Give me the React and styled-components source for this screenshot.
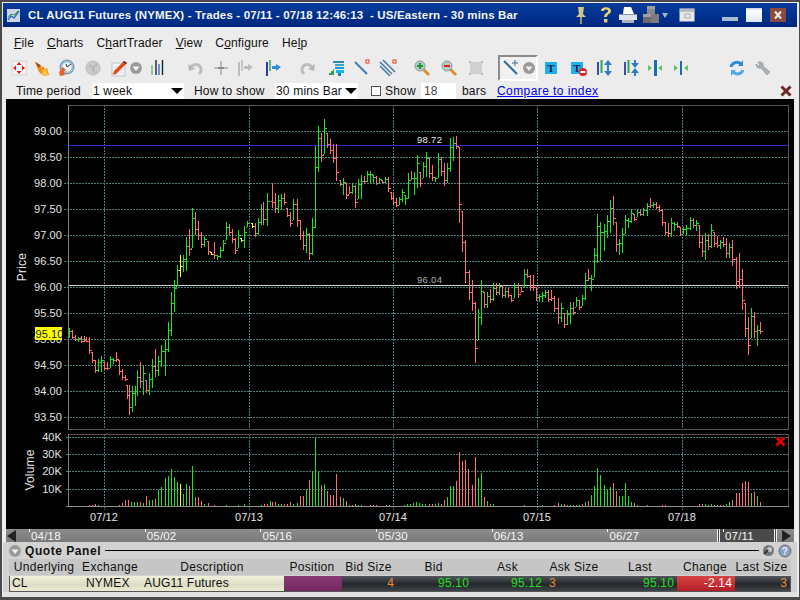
import React from 'react';
import styled, { createGlobalStyle } from 'styled-components';

const Global = createGlobalStyle`
  html, body { margin: 0; padding: 0; background: #3c3c3c; }
  * { box-sizing: border-box; }
`;

const UI = `"Liberation Sans", Arial, sans-serif`;

const Frame = styled.div`
  width: 800px; height: 600px; overflow: hidden;
  display: flex; flex-direction: column;
  border: 2px solid #4a4a4a; border-bottom-width: 3px; border-right-width: 1px;
  padding: 1px 2px 0 1px;
  background: #ececec;
  font-family: ${UI}; font-size: 12px; letter-spacing: .18px; color: #111;
`;
const TitleBar = styled.div`
  height: 24px; flex: none; display: flex; align-items: center; padding-left: 4px;
  background: linear-gradient(#0a3c9c, #00328f 50%, #00277f);
  color: #f4f4f4; font-weight: 700; font-size: 11.5px; letter-spacing: .15px; white-space: pre;
`;
const TitleText = styled.span` margin-left: 8px; flex: 1; `;
const TitleIcons = styled.div` display: flex; align-items: center; margin-right: 11px; `;
const TitleSlot = styled.span`
  display: flex; justify-content: center; align-items: center; width: ${p => p.$w}px; margin-left: ${p => p.$ml || 0}px;
`;
const MenuBar = styled.div`
  height: 28px; flex: none; display: flex; align-items: center; gap: 13px; padding: 4px 0 0 11px; font-size: 12px;
`;
const MenuItem = styled.span` & u { text-decoration: underline; } `;
const Toolbar = styled.div` height: 26px; flex: none; display: flex; align-items: center; padding-left: 6px; `;
const Tool = styled.span`
  display: flex; align-items: center; justify-content: center; flex: none;
  width: ${p => p.$w || 20}px; margin-left: ${p => p.$ml || 0}px;
`;
const Pressed = styled.span`
  display: flex; align-items: center; justify-content: center; flex: none; gap: 1px;
  width: 40px; height: 26px; margin-left: ${p => p.$ml || 0}px;
  border: 2px solid #8c8c8c; border-right-color: #fff; border-bottom-color: #fff; background: #f0f0f0;
`;
const Options = styled.div` height: 18px; flex: none; display: flex; align-items: center; padding: 1px 0 0 13px; position: relative; `;
const Field = styled.span` margin-left: ${p => p.$ml || 0}px; width: ${p => p.$w}px; white-space: nowrap; flex: none; `;
const SelectBox = styled.span`
  display: flex; align-items: center; justify-content: space-between; height: 16px; background: #fff; white-space: nowrap; flex: none;
  width: ${p => p.$w}px; margin-left: ${p => p.$ml || 0}px; padding: 0 1px 0 1px;
`;
const Arrow = styled.i`
  width: 0; height: 0; border-left: 6px solid transparent; border-right: 6px solid transparent; border-top: 6px solid #000;
`;
const Check = styled.i` width: 10px; height: 10px; border: 1px solid #555; background: #fff; margin: 0 4px 0 ${p => p.$ml}px; flex: none; `;
const NumInput = styled.span` width: 35px; height: 16px; background: #fff; padding-left: 3px; line-height: 16px; color: #444; flex: none; `;
const LinkText = styled.a` color: #0000ee; text-decoration: underline; margin-left: 11px; white-space: nowrap; letter-spacing: .42px; `;
const CloseX = styled.span` margin-left: auto; margin-right: 5px; display: flex; `;
const ChartBox = styled.div` height: 430px; flex: none; margin: 0 3px; background: #000; `;
const ChartSvg = styled.svg` display: block; width: 788px; height: 430px; `;
const SliderBar = styled.div`
  height: 13px; flex: none; margin: 0 3px; display: flex; padding-left: 23px; position: relative;
  background: linear-gradient(#8c8c8c, #7a7a7a);
`;
const SliderLabel = styled.span`
  flex: none; width: 115.7px; color: #f6f6f6; font-size: 11.5px; line-height: 13px; padding: 1px 0 0 2px; position: relative; letter-spacing: .2px;
  &::before { content: ''; position: absolute; left: 0; top: 0; width: 1px; height: 3px; background: #fff; }
`;
const LastLabel = styled(SliderLabel)` position: absolute; left: 717px; width: 40px; `;
const SliderEnd = styled.span`
  position: absolute; top: 0; bottom: 0; left: ${p => p.$l}px; display: flex; align-items: center;
`;
const Thumb = styled.span`
  position: absolute; top: 0; bottom: 0; left: 711px; width: 60px;
  background: #4a4a4a; border-left: 3px double #eee; border-right: 3px double #eee;
`;
const PanelHead = styled.div`
  height: 17px; flex: none; display: flex; align-items: center; background: #d2d2d2; padding: 0 5px 0 5px;
`;
const PanelTitle = styled.b` font-size: 12px; letter-spacing: .55px; margin: 0 4px 0 3px; color: #111; white-space: nowrap; `;
const PanelRule = styled.i` flex: 1; height: 1px; background: #000; margin-right: 3px; `;
const PanelBody = styled.div` height: 38px; flex: none; background: #d2d2d2; display: flex; flex-direction: column; padding: 0 6px; `;
const TABLE_COLS = '70px 62px 142px 58px 55px 75px 73px 60px 72px 58px 55px';
const HeadRow = styled.div` display: grid; grid-template-columns: ${TABLE_COLS}; height: 16px; flex: none; background: #c6c6c6; `;
const HeadCell = styled.span` text-align: center; line-height: 16px; white-space: nowrap; font-size: 12px; letter-spacing: .3px; `;
const DataRow = styled.div`
  display: grid; grid-template-columns: ${TABLE_COLS}; height: 16px; flex: none; margin: 1px 0 0; border: 1px solid #555; border-top: 0;
  width: 782px; font-size: 12px; line-height: 15px;
  background: linear-gradient(#50565c, #23262a 55%, #3f454b);
`;
const Cell = styled.span`
  white-space: nowrap; text-align: ${p => p.$a || 'right'}; padding: 0 ${p => p.$pr ?? 3}px 0 ${p => p.$pl ?? 0}px;
  color: ${p => p.$c || '#111'};
`;
const LightCell = styled(Cell)` background: linear-gradient(#f0f0dc, #dcdcc4 60%, #ecead2); `;
const PurpleCell = styled(Cell)` background: linear-gradient(#8a3a78, #72285e); `;
const RedCell = styled(Cell)` background: linear-gradient(#d84444, #b41e28); `;
const Footer = styled.div` height: 5px; flex: none; background: #e2e2e2; margin: 0 -6px; `;
const HelpWrap = styled.span` display: flex; margin-left: 3px; `;

/* ---------- chart data ---------- */
const A = `207g328-338 216r330-339 225r335-341 234g337-342 243r336-343 252r336-342 258r337-342 266r337-354 275r352-363 284r360-373 293g359-372 302g356-372 311r362-370 320r362-370 329g356-368 338g358-364 347r352-362 356r360-375 365r369-380 374r375-381 380r385-399 387r385-415 396g386-412 404g386-406 412g370-396 421r362-388 430g366-395 438r380-393 448g373-395 457g359-388 466r349-377 475g356-376 484g345-367 496g340-376 505g322-352 514g292-336 523g280-312 532g265-286 541y255-277 550g255-272 559g237-271 568r229-256 577g208-248 586r212-235 595r221-240 604r232-248 613g236-247 624r241-255 632y252-255 643r242-259 652g255-260 660g247-258 670g240-251 679g222-240 688r224-235 697r229-243 706r238-254 715g230-248 724y238-242 733g226-248 742g221-227 755y223-228 764r223-237 773g218-235 782g204-225 790r202-225 800g193-226`;
const B = `7r183-208 16r193-213 25g195-213 34g194-210 43r193-205 52r208-217 61r212-227 70g199-220 80r199-227 90r220-240 100r231-250 109g228-253 118r233-260 127g218-255 136g146-228 145g126-172 154r133-162 163g119-154 172r133-148 181r139-154 190r144-163 199r144-181 210r180-186 220g178-195 229r183-199 238r186-194 247g183-194 256r185-208 265g179-199 274g175-199 283r176-183 292g171-182 301g171-183 310g175-183 319r176-185 328g178-183 337r180-183 346g177-183 355r177-192 364r192-200 370r193-205 377r198-207 386g197-205 395g189-202 404g195-205 413g173-199 422r171-180 431g172-195 440g155-188 449r172-187 458g162-178 467g152-177 476r157-178 485r165-181 494g177-182 503g153-178 512r157-176 521r163-186 530g163-183 541g138-172 550g137-161 559r136-149 568r147-223 577r211-252 586r240-283`;
const C = `12r270-300 21r280-311 31r302-363 40g309-340 49g280-325 58r292-308 67g292-308 76r289-303 85g283-301 94r283-295 103g283-295 112r285-298 121g288-298 130r288-298 139r295-302 148g283-298 158r283-298 167r287-292 176g269-287 186r269-278 195r275-291 204r275-291 213r287-301 222g294-302 231g292-302 240g290-298 249r290-302 258r290-301 267r296-312 280r298-324 289g303-322 298r313-328 307g310-325 316g302-324 325r302-315 334g297-307 343r300-310 352g295-306 361g273-300 370r269-281 379g275-291`;
const D = `193g248-277 202g214-263 211g222-261 222g224-251 232g215-238 241g200-233 250r196-225 259r222-252 268g239-255 277g228-253 286g215-234 295g218-228 304g209-223 313r214-221 322g210-217 331r210-216 340g208-216 352g203-216 361r198-208 370g202-208 379r202-209 388r205-212 397r209-226 406r222-235 415r223-237 424g218-237 433g222-231 442r222-228 451r227-236 460g227-234 469g225-236 481g217-230 490r218-228 499g220-231 508r225-248 517r235-257 526g233-260 535r234-250 544g224-248 553r232-247 562r236-248 571g240-249 580r237-247 589r238-258 598g243-258 607r240-266 619r257-289 628r253-288 637r269-310 646r303-337 655r317-355 664g308-338 673r312-338 682g325-346 691r322-334`;

const COLORS = { g: '#16e61c', r: '#ff6f6f', y: '#ffff20' };
const parse = (text, base) =>
  text.split(' ').map(t => {
    const m = t.match(/^(\d+)([gry])(\d+)-(\d+)$/);
    return { x: Math.round(base + +m[1] / 3), c: m[2], a: +m[3], b: +m[4] };
  });
const BARS = [...parse(A, 0), ...parse(B, 270), ...parse(C, 465), ...parse(D, 530)];

const VA = `266r616 275r616 284r612 293g616 356r615 365r610 374r600 385r600 394g606 403g606 412g606 421r606 430g610 439r588 448g600 457g600 466r597 475g570 484g561 495g533 505g527 514g507 523g531 532g546 541y552 550g582 559g552 568r558 577g497 586r590 595r590 604r604 613g611 625r609 643r616 679g616 715g616 733g612 782g615 791r612 800r612 809g603`;
const VB = `7r606 16r606 25g612 34g612 43r612 52r612 61r606 70g612 82g610 91r588 100r588 109g567 118r540 127g516 136g414 145g516 154r555 163g552 172r573 181r585 190r585 199r522 211r591 220g594 229r603 238g615 247g615 256r612 265g615 274g615 301r615 310r615 319r615 349g615 358r615 403g615 412g612 421g612 430g609 439g606 448g609 457g612 466g612 478r612 487r612 496g612 505g609 514r612 523r600 532g591 541g558 550g558 559r543 568r456 577r483 586r480 595r507 607r555 616r471 625g534 634g519 643r591 652g603 661r612 670g612 763g615`;
const VC = `37g615 73r615 85r609 94g612 103r612 112g615 121g615 130g615 139g615 148g615 157r612 166g606 175r603 184g585 193g558 202g504 211g525 223g555 232g570 241g561 250r549 259r573 268g588 277g588 286g549 295g588 304g606 313r609 322g615 352g615 397r615 406r615 508r612 517r612 526g612 535g615 544g612 553r615 562g615 571r615 580r615 589g612 598g606 607r600 619r579 628r579 637r549 646r543 655r546 664g579 673r576 682g588 691r606`;
const parseVol = (text, base) =>
  text.split(' ').map(t => {
    const m = t.match(/^(\d+)([gry])(\d+)$/);
    return { x: Math.round(base + +m[1] / 3), c: m[2], top: Math.round(300 + +m[3] / 3) };
  });
const VOLS = [...parseVol(VA, 0), ...parseVol(VB, 270), ...parseVol(VC, 530)];

const PRICES = ['99.00', '98.50', '98.00', '97.50', '97.00', '96.50', '96.00', '95.50', '95.00', '94.50', '94.00', '93.50'];
const priceY = i => Math.round(130.5 + i * 26.05);
const GRID_X = [104, 249, 393, 537, 682];
const DAYS = ['07/12', '07/13', '07/14', '07/15', '07/18'];
const VOL_TICKS = [['40K', 437], ['30K', 454], ['20K', 471], ['10K', 489]];

const closeOf = b => {
  const r = b.b - b.a;
  return b.c === 'g' ? b.a + Math.round(r * 0.25) : b.c === 'r' ? b.b - Math.round(r * 0.25) : b.a + Math.round(r * 0.5);
};

const PriceBar = ({ bar, open }) => {
  const close = closeOf(bar);
  const o = Math.min(bar.b, Math.max(bar.a, open));
  return (
    <g stroke={COLORS[bar.c]}>
      <line x1={bar.x + 0.5} x2={bar.x + 0.5} y1={bar.a} y2={bar.b} />
      <line x1={bar.x - 1} x2={bar.x} y1={o + 0.5} y2={o + 0.5} />
      <line x1={bar.x + 1} x2={bar.x + 3} y1={close + 0.5} y2={close + 0.5} />
    </g>
  );
};

const Chart = () => (
  <ChartSvg viewBox="6 99 788 430" fontFamily={UI}>
    <g stroke="#4f8080" strokeDasharray="2 1" shapeRendering="crispEdges">
      {PRICES.map((_, i) => <line key={i} x1="64" x2="788" y1={priceY(i) + 0.5} y2={priceY(i) + 0.5} />)}
      {VOL_TICKS.map(([t, y]) => <line key={t} x1="66" x2="788" y1={y + 0.5} y2={y + 0.5} />)}
      {GRID_X.map(x => <line key={x} x1={x + 0.5} x2={x + 0.5} y1="105" y2="429" />)}
      {GRID_X.map(x => <line key={'v' + x} x1={x + 0.5} x2={x + 0.5} y1="434" y2="510" />)}
    </g>
    <g fill="none" stroke="#555" shapeRendering="crispEdges">
      <rect x="68.5" y="105.5" width="720" height="324" />
      <rect x="68.5" y="434.5" width="720" height="72" />
      <line x1="68.5" x2="68.5" y1="105" y2="430" stroke="#808080" />
      <line x1="68.5" x2="68.5" y1="434" y2="507" stroke="#808080" />
      <line x1="66" x2="789" y1="506.5" y2="506.5" stroke="#909090" />
    </g>
    <g shapeRendering="crispEdges">
      <line x1="69" x2="788" y1="145.5" y2="145.5" stroke="#2a2ad0" />
      <line x1="69" x2="788" y1="285.5" y2="285.5" stroke="#d0d0d0" />
    </g>
    <text x="417" y="143" fill="#e8e8e8" fontSize="9.5" letterSpacing=".3">98.72</text>
    <text x="417" y="283" fill="#b0b0b0" fontSize="9.5" letterSpacing=".3">96.04</text>
    <g shapeRendering="crispEdges">
      {BARS.map((b, i) => <PriceBar key={i} bar={b} open={i ? closeOf(BARS[i - 1]) : b.a} />)}
      {VOLS.map((v, i) => <line key={i} x1={v.x + 0.5} x2={v.x + 0.5} y1={v.top} y2="506" stroke={COLORS[v.c]} />)}
    </g>
    <g fill="#e4e4e4" fontSize="11" letterSpacing=".1">
      {PRICES.map((p, i) => <text key={p} x="62" y={priceY(i) + 4} textAnchor="end">{p}</text>)}
      {VOL_TICKS.map(([t, y]) => <text key={t} x="62" y={y + 4} textAnchor="end">{t}</text>)}
      {DAYS.map((d, i) => <text key={d} x={GRID_X[i]} y="521" textAnchor="middle">{d}</text>)}
      <text transform="translate(26 267) rotate(-90)" textAnchor="middle" fontSize="12" letterSpacing=".2">Price</text>
      <text transform="translate(34 470) rotate(-90)" textAnchor="middle" fontSize="12" letterSpacing=".2">Volume</text>
    </g>
    <rect x="35" y="327" width="27" height="13" fill="#ffff00" />
    <text x="35.5" y="338" fontSize="11" fill="#222" letterSpacing=".1">95.10</text>
    <path d="M776.5 437.5l8 8M784.5 437.5l-8 8" stroke="#e00000" strokeWidth="3" />
  </ChartSvg>
);

/* ---------- icons ---------- */
const Ic = ({ w = 18, h = 18, children }) => <svg width={w} height={h} viewBox={`0 0 ${w} ${h}`}>{children}</svg>;
const MoveIcon = () => (
  <Ic><rect x="2" y="2" width="14" height="14" fill="#f4f4f4" stroke="#d6d6d6" />
    <path d="M9 3l2.5 3h-5zM9 15l2.5-3h-5zM3 9l3-2.5v5zM15 9l-3-2.5v5z" fill="#e01818" /></Ic>
);
const FlameIcon = () => (
  <Ic><path d="M2 3l6 3 1 3 1-2 2 3 2-1 2 7-5 1-5-4z" fill="#f58a1c" /><path d="M2 3l5 3-1 3z" fill="#7a4a30" /><path d="M9 11l4-1 2 6-5 1z" fill="#ffc84a" /></Ic>
);
const GaugeIcon = () => (
  <Ic><circle cx="10" cy="8" r="7" fill="#9cc0d8" stroke="#6c8ca4" /><circle cx="10" cy="8" r="4.6" fill="#f0f6fa" /><path d="M10 8l4-3M10 8l-1-3" stroke="#333" />
    <path d="M2 13l4-5 3 3-2 1 1 4-5 1z" fill="#e8622a" /></Ic>
);
const ClockIcon = () => (
  <Ic><circle cx="9" cy="9" r="7" fill="#c9c9c9" stroke="#bdbdbd" /><path d="M9 9l4-4M9 9l1 5M9 9L5 6" stroke="#a8a8a8" /></Ic>
);
const PencilIcon = () => (
  <Ic><rect x="2" y="4" width="13" height="13" fill="#f4f6fa" stroke="#c0c4d0" /><path d="M2 8h13M2 11h13M2 14h13" stroke="#dfe3ec" />
    <path d="M3 16l1-4L14 2l3 2L6 15z" fill="#e04a1c" /><path d="M14 2l3 2-1 1-3-2z" fill="#333" /></Ic>
);
const DropCircle = () => (
  <Ic w={14} h={14}><circle cx="7" cy="7" r="6" fill="#9a9a9a" /><path d="M3.5 5.5h7L7 10z" fill="#f2f2f2" /></Ic>
);
const BarsIcon = () => (
  <Ic><g strokeWidth="1.4"><path d="M4 6v10" stroke="#5cc47c" /><path d="M8 1v15" stroke="#222" /><path d="M11 5v11" stroke="#3a6cd8" /><path d="M14.5 1v15" stroke="#222" /></g><path d="M15.5 6v9" stroke="#a8dcb8" /></Ic>
);
const UndoIcon = ({ flip }) => (
  <Ic><g transform={flip ? 'translate(18 0) scale(-1 1)' : undefined}><path d="M5 8c3-4 10-3 10 3 0 2-1 3-2 4" fill="none" stroke="#bdbdbd" strokeWidth="3" /><path d="M2 5l1 7 6-2z" fill="#b4b4b4" /></g></Ic>
);
const CrossIcon = () => (
  <Ic><path d="M9 2v14M2 9h14" stroke="#bcbcbc" strokeWidth="2" /><path d="M6 9h6" stroke="#8a8a8a" strokeWidth="2" /></Ic>
);
const BarArrow = ({ col = '#bcbcbc', col2 = '#bcbcbc', arrow = '#bcbcbc', left }) => (
  <Ic><path d="M3 3v14" stroke={col} strokeWidth="2" /><path d="M6 1v11" stroke={col2} strokeWidth="1.5" />
    {left ? <path d="M8 8l5-3v2h4v3h-4v2z" fill={arrow} /> : <path d="M17 8l-5-3v2H8v3h4v2z" fill={arrow} />}</Ic>
);
const ChartBlue = () => (
  <Ic><path d="M2 16v-2h2v-2h2v-2h1v6z" fill="#26a84a" /><rect x="6" y="2" width="11" height="2" fill="#2e8ca8" /><rect x="8" y="5" width="9" height="2" fill="#3aa6c6" /><rect x="8" y="8" width="9" height="2" fill="#1c9ce0" /><rect x="9" y="11" width="8" height="3" fill="#18b4ec" /><path d="M11 14h3v3h-3z" fill="#1c7cc8" /></Ic>
);
const LineIcon = () => (
  <Ic><path d="M2 3l12 12" stroke="#3c7cb0" strokeWidth="2" /><rect x="13" y="1" width="3" height="3" fill="#fff" stroke="#e03a1c" /></Ic>
);
const HatchIcon = () => (
  <Ic><path d="M1 3l12 12M1 7l10 10M4 1l12 12" stroke="#4a7ca8" strokeWidth="1.6" /><rect x="14" y="1" width="3" height="3" fill="#fff" stroke="#e03a1c" /></Ic>
);
const ZoomIcon = ({ minus }) => (
  <Ic><path d="M10 10l6 6" stroke="#d8922c" strokeWidth="3" /><circle cx="7" cy="7" r="5" fill="#b4c8c8" stroke="#8a9a9a" />
    <path d="M4 7h6" stroke={minus ? '#d82020' : '#1a9c28'} strokeWidth="2" />{!minus && <path d="M7 4v6" stroke="#1a9c28" strokeWidth="2" />}</Ic>
);
const BoxGrey = () => (
  <Ic><rect x="3" y="3" width="12" height="12" fill="#d0d0d0" /><path d="M2 2h2v2H2zM14 2h2v2h-2zM2 14h2v2H2zM14 14h2v2h-2z" fill="#c0c0c0" /></Ic>
);
const LineCross = () => (
  <Ic w={20} h={18}><path d="M3 2l13 13" stroke="#2f6c9c" strokeWidth="2" /><path d="M14 1v6M11 4h6" stroke="#3a6c8c" /></Ic>
);
const TIcon = ({ no }) => (
  <Ic w={no ? 20 : 14} h={18}>
    <rect x="1" y="3" width="12" height="12" fill="#20b0f0" /><text x="7" y="13" textAnchor="middle" fontFamily='"Liberation Serif", serif' fontWeight="700" fontSize="11" fill="#123">T</text>
    {no && <><circle cx="13" cy="13" r="4" fill="#e02020" /><rect x="10.5" y="12" width="5" height="2" fill="#fff" /></>}
  </Ic>
);
const VArrows = ({ inward }) => (
  <Ic><path d="M2 3v13" stroke="#3a4ab8" strokeWidth="2" /><path d="M5.5 1v13" stroke="#2aa84a" strokeWidth="2" />
    <path d={inward ? 'M12 9l-4-5h3V1h2v3h3zM12 9l-4 5h3v3h2v-3h3z' : 'M12 1L8 6h3v6H8l4 5 4-5h-3V6h3z'} fill="#2c7cc8" /></Ic>
);
const HExpand = ({ thin }) => (
  <Ic><path d={thin ? 'M9 2v14' : 'M8 1h3v16H8z'} stroke={thin ? '#1c6cb0' : 'none'} strokeWidth="2" fill={thin ? 'none' : '#1c6cb0'} />
    <path d="M6 9l-4-3v6zM12 9l4-3v6z" fill="#5cc45c" /></Ic>
);
const RefreshIcon = () => (
  <Ic><path d="M3 8a6 6 0 0 1 10-3" fill="none" stroke="#2c8cd8" strokeWidth="3" /><path d="M15 1v6h-5z" fill="#2c8cd8" /><path d="M15 11a6 6 0 0 1-10 2" fill="none" stroke="#50a8e8" strokeWidth="3" /><path d="M3 17v-6h5z" fill="#50a8e8" /></Ic>
);
const WrenchIcon = () => (
  <Ic><path d="M4 3l2 3-1 1-3-2c0 3 2 5 5 4l6 7 3-3-7-6c1-3-2-5-5-4z" fill="#a8b0b8" stroke="#8a929a" strokeWidth=".6" /></Ic>
);
const PinIcon = () => (
  <svg width="14" height="20" viewBox="0 0 14 20"><path d="M4 2h6l-1 7 3 3H2l3-3z" fill="#d8c488" /><path d="M7 12v7" stroke="#c8b478" strokeWidth="1.5" /></svg>
);
const HelpIcon = () => (
  <svg width="16" height="20" viewBox="0 0 16 20"><path d="M3 6c0-5 10-5 10 0 0 3-4 3-4 6H6c0-4 4-4 4-6s-4-2-4 0z" fill="#e8d070" /><rect x="6" y="14" width="3.4" height="3.4" fill="#e8d070" /></svg>
);
const PrintIcon = () => (
  <svg width="22" height="20" viewBox="0 0 22 20"><path d="M7 2h7l3 7H6z" fill="#fff" /><path d="M2 9h18v6H2z" fill="#dfe4ec" /><path d="M5 15h12v3H5z" fill="#aab2bc" /><path d="M2 9h18v1H2z" fill="#8c98a8" /></svg>
);
const CubesIcon = () => (
  <svg width="18" height="20" viewBox="0 0 18 20"><rect x="5" y="1" width="8" height="8" fill="#8a8a8a" /><rect x="1" y="9" width="8" height="9" fill="#6a6a6a" /><rect x="9" y="9" width="8" height="9" fill="#7c7c7c" /><path d="M5 1h8v3H5zM1 9h8v3H1z" fill="#a0a0a0" /></svg>
);
const SmallDown = () => <svg width="8" height="8" viewBox="0 0 8 8"><path d="M1 2h6L4 7z" fill="#aab4c8" /></svg>;
const WindowIcon = () => (
  <svg width="16" height="14" viewBox="0 0 16 14"><rect x=".5" y=".5" width="15" height="13" fill="#e8e8e8" /><rect x="1" y="1" width="14" height="3" fill="#bcbcbc" /><rect x="6" y="6" width="5" height="4" fill="none" stroke="#aaa" /></svg>
);
const MinIcon = () => <svg width="16" height="16" viewBox="0 0 16 16"><rect y="10" width="16" height="4" fill="#a8bcd0" /></svg>;
const MaxIcon = () => <svg width="16" height="14" viewBox="0 0 16 14"><defs><linearGradient id="mx" x1="0" y1="0" x2="0" y2="1"><stop offset="0" stopColor="#c0d0e4" /><stop offset=".2" stopColor="#fff" /><stop offset="1" stopColor="#dfe6f0" /></linearGradient></defs><rect width="16" height="14" fill="url(#mx)" /></svg>;
const CloseIcon = () => <svg width="16" height="14" viewBox="0 0 16 14"><rect width="16" height="14" fill="#8a4a40" /><path d="M5 3.5l6 7M11 3.5l-6 7" stroke="#f4e8e4" strokeWidth="2" /></svg>;
const LogoIcon = () => (
  <svg width="13" height="13" viewBox="0 0 13 13"><rect width="13" height="13" fill="#cfd6e2" /><path d="M1 11l3-4 3 2 5-7" stroke="#2a6cc0" fill="none" strokeWidth="1.4" /><path d="M1 8l3-3 3 1 4-4" stroke="#28a050" fill="none" /></svg>
);
const DarkX = () => <svg width="12" height="12" viewBox="0 0 12 12"><path d="M1.5 1.5l9 9M10.5 1.5l-9 9" stroke="#6c2c24" strokeWidth="3" /></svg>;
const Tri = ({ right }) => <svg width="9" height="12" viewBox="0 0 9 12"><path d={right ? 'M0 0l9 6-9 6z' : 'M9 0L0 6l9 6z'} fill="#222" /></svg>;
const PanelGear = () => <svg width="13" height="13" viewBox="0 0 13 13"><circle cx="6.5" cy="6.5" r="5.5" fill="#777" /><circle cx="7.5" cy="5.5" r="2.5" fill="#c4c4c4" /><path d="M2 10l4-4" stroke="#333" strokeWidth="2" /></svg>;
const PanelHelp = () => <svg width="14" height="14" viewBox="0 0 14 14"><circle cx="7" cy="7" r="6" fill="#8aa0c0" stroke="#6a6a6a" /><text x="7" y="10.5" textAnchor="middle" fontSize="10" fontWeight="700" fontFamily={UI} fill="#e8eef8">?</text></svg>;

const TOOLS_LEFT = [
  [MoveIcon, 0], [FlameIcon, 3], [GaugeIcon, 4], [ClockIcon, 7], [PencilIcon, 6],
];
const TOOLS_MID = [
  [BarsIcon, 4], [UndoIcon, 18], [CrossIcon, 6], [BarArrow, 4],
];

const COLUMNS = ['Underlying', 'Exchange', 'Description', 'Position', 'Bid Size', 'Bid', 'Ask', 'Ask Size', 'Last', 'Change', 'Last Size'];
const TICKS = ['04/18', '05/02', '05/16', '05/30', '06/13', '06/27'];
const GREEN = '#22e01c';
const ORANGE = '#ee8a3a';

export default function App() {
  return (
    <Frame>
      <Global />
      <TitleBar>
        <LogoIcon />
        <TitleText>CL AUG11 Futures (NYMEX) - Trades - 07/11 - 07/18 12:46:13  - US/Eastern - 30 mins Bar</TitleText>
        <TitleIcons>
          <TitleSlot $w={14}><PinIcon /></TitleSlot>
          <TitleSlot $w={16} $ml={10}><HelpIcon /></TitleSlot>
          <TitleSlot $w={22} $ml={3}><PrintIcon /></TitleSlot>
          <TitleSlot $w={18} $ml={3}><CubesIcon /></TitleSlot>
          <TitleSlot $w={8} $ml={1}><SmallDown /></TitleSlot>
          <TitleSlot $w={16} $ml={10}><WindowIcon /></TitleSlot>
          <TitleSlot $w={16} $ml={27}><MinIcon /></TitleSlot>
          <TitleSlot $w={16} $ml={8}><MaxIcon /></TitleSlot>
          <TitleSlot $w={16} $ml={8}><CloseIcon /></TitleSlot>
        </TitleIcons>
      </TitleBar>
      <MenuBar>
        <MenuItem><u>F</u>ile</MenuItem>
        <MenuItem><u>C</u>harts</MenuItem>
        <MenuItem>C<u>h</u>artTrader</MenuItem>
        <MenuItem><u>V</u>iew</MenuItem>
        <MenuItem>C<u>o</u>nfigure</MenuItem>
        <MenuItem>He<u>l</u>p</MenuItem>
      </MenuBar>
      <Toolbar>
        {TOOLS_LEFT.map(([I, ml], i) => <Tool key={i} $ml={ml}><I /></Tool>)}
        <Tool $w={14}><DropCircle /></Tool>
        {TOOLS_MID.map(([I, ml], i) => <Tool key={i} $ml={ml}><I /></Tool>)}
        <Tool $ml={8}><BarArrow col="#2a3cb0" col2="#2aa84a" arrow="#2c8ce0" /></Tool>
        <Tool $ml={15}><UndoIcon flip /></Tool>
        <Tool $ml={8}><ChartBlue /></Tool>
        <Tool $ml={6}><LineIcon /></Tool>
        <Tool $ml={6}><HatchIcon /></Tool>
        <Tool $ml={14}><ZoomIcon /></Tool>
        <Tool $ml={7}><ZoomIcon minus /></Tool>
        <Tool $ml={7}><BoxGrey /></Tool>
        <Pressed $ml={12}><LineCross /><DropCircle /></Pressed>
        <Tool $ml={3}><TIcon /></Tool>
        <Tool $ml={9}><TIcon no /></Tool>
        <Tool $ml={5}><VArrows /></Tool>
        <Tool $ml={7}><VArrows inward /></Tool>
        <Tool $ml={3}><HExpand /></Tool>
        <Tool $ml={6}><HExpand thin /></Tool>
        <Tool $ml={36}><RefreshIcon /></Tool>
        <Tool $ml={6}><WrenchIcon /></Tool>
      </Toolbar>
      <Options>
        <Field $w={76}>Time period</Field>
        <SelectBox $w={92}>1 week<Arrow /></SelectBox>
        <Field $ml={10} $w={81}>How to show</Field>
        <SelectBox $w={83}>30 mins Bar<Arrow /></SelectBox>
        <Check $ml={13} />
        <Field $w={36}>Show</Field>
        <NumInput>18</NumInput>
        <Field $ml={6} $w={24}>bars</Field>
        <LinkText>Compare to index</LinkText>
        <CloseX><DarkX /></CloseX>
      </Options>
      <ChartBox><Chart /></ChartBox>
      <SliderBar>
        {TICKS.map(t => <SliderLabel key={t}>{t}</SliderLabel>)}
        <Thumb />
        <LastLabel>07/11</LastLabel>
        <SliderEnd $l={1}><Tri /></SliderEnd>
        <SliderEnd $l={776}><Tri right /></SliderEnd>
      </SliderBar>
      <PanelHead>
        <DropCircle />
        <PanelTitle>Quote Panel</PanelTitle>
        <PanelRule />
        <PanelGear />
        <HelpWrap><PanelHelp /></HelpWrap>
      </PanelHead>
      <PanelBody>
        <HeadRow>{COLUMNS.map(c => <HeadCell key={c}>{c}</HeadCell>)}</HeadRow>
        <DataRow>
          <LightCell $a="left" $pl={2}>CL</LightCell>
          <LightCell $a="left" $pl={6}>NYMEX</LightCell>
          <LightCell $a="left" $pl={2}>AUG11 Futures</LightCell>
          <PurpleCell />
          <Cell $c={ORANGE}>4</Cell>
          <Cell $c={GREEN}>95.10</Cell>
          <Cell $c={GREEN}>95.12</Cell>
          <Cell $c={ORANGE} $a="left" $pl={4}>3</Cell>
          <Cell $c={GREEN}>95.10</Cell>
          <RedCell $c="#fff">-2.14</RedCell>
          <Cell $c={ORANGE}>3</Cell>
        </DataRow>
        <Footer />
      </PanelBody>
    </Frame>
  );
}
